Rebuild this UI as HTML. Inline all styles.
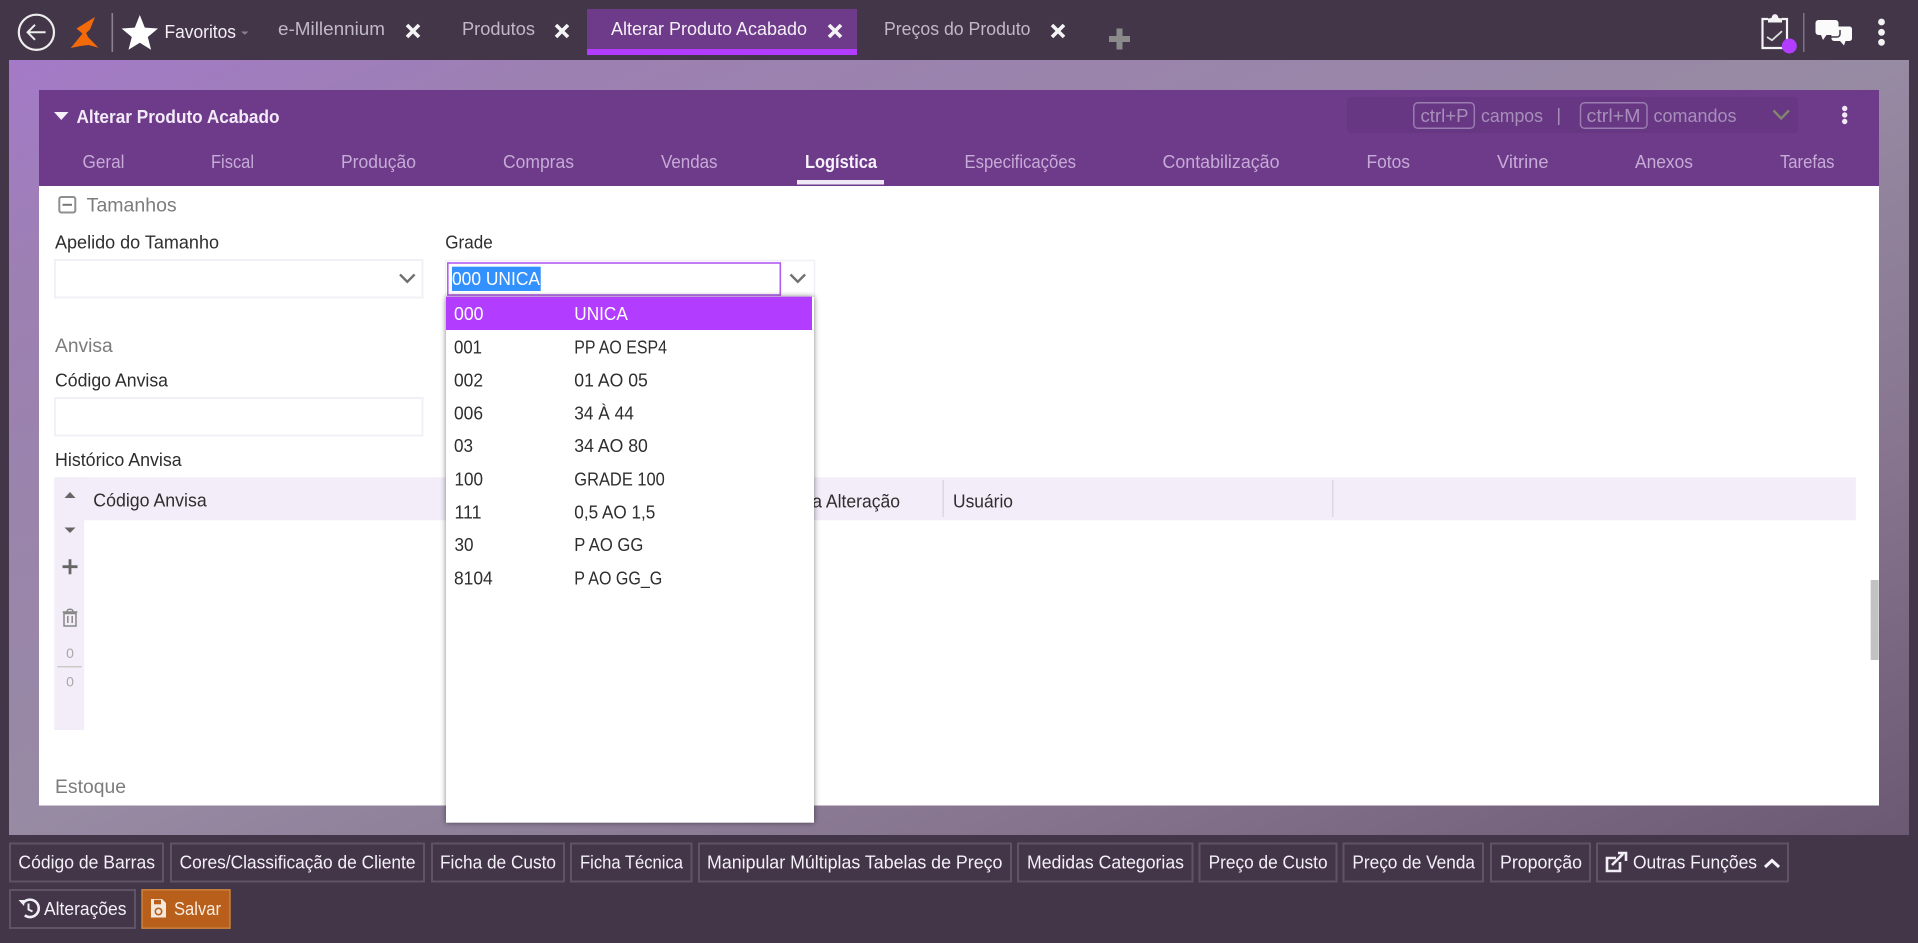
<!DOCTYPE html>
<html lang="pt-BR">
<head>
<meta charset="utf-8">
<title>Alterar Produto Acabado</title>
<style>
html,body{margin:0;padding:0;width:1918px;height:943px;overflow:hidden;background:#433648}
svg{display:block;filter:blur(.35px)}
text{font-family:"Liberation Sans",Arial,sans-serif;font-size:18px;fill:#2e2e2e}
.top{fill:#c0b8c8}
.wh{fill:#f4f0f6}
.tab{fill:#c6abd6;font-size:18.5px}
.sec{fill:#7c7c7c;font-size:19px}
.btn{fill:#f4f0f8}
.kbd{fill:#a78fba;font-size:18.5px}
.bx{fill:#433648;stroke:#605365;stroke-width:2}
.inp{fill:#fff;stroke:#f2eff6;stroke-width:2}
.chev{fill:none;stroke:#707070;stroke-width:2.4}
.x{stroke:#f4f4f4;stroke-width:3.6;fill:none}
</style>
</head>
<body>
<svg xmlns="http://www.w3.org/2000/svg" width="1918" height="943" viewBox="0 0 1918 943">
<defs>
<linearGradient id="bg" x1="0" y1="0" x2="1" y2="1">
<stop offset="0" stop-color="#a47ac8"/>
<stop offset=".15" stop-color="#9c80b2"/>
<stop offset=".5" stop-color="#978aa3"/>
<stop offset=".75" stop-color="#87758f"/>
<stop offset="1" stop-color="#6b5973"/>
</linearGradient>
<filter id="sh" x="-5%" y="-5%" width="110%" height="110%"><feGaussianBlur stdDeviation="3"/></filter>
</defs>

<rect width="1918" height="943" fill="#433648"/>
<rect x="9" y="60" width="1900" height="775" fill="url(#bg)"/>

<!-- top bar -->
<circle cx="36.4" cy="32.3" r="17.6" fill="none" stroke="#eee" stroke-width="2.2"/>
<path d="M45.6 32.3H27.8M35 24.8l-7.4 7.5 7.4 7.5" fill="none" stroke="#eee" stroke-width="2"/>
<path d="M95 17L76.5 28.5 84 35 90 29.5Z" fill="#f26a0a"/>
<path d="M85 30.5L70.7 48 80.5 46 88.5 45 98.5 47.8 88 37Z" fill="#f26a0a"/>
<rect x="111.5" y="13" width="1.6" height="39" fill="#8b8090"/>
<path d="M139.8 15l5 12.6 13.2.9-10.2 8.5 3.3 12.8-11.3-7.1-11.3 7.1 3.3-12.8-10.2-8.5 13.2-.9z" fill="#fff"/>
<text x="164.5" y="38" textLength="71.5" lengthAdjust="spacingAndGlyphs" class="wh">Favoritos</text>
<path d="M241 31.5h7.500l-3.75 3.2z" fill="#8b8090"/>

<text x="278" y="35" textLength="107" lengthAdjust="spacingAndGlyphs" class="top">e-Millennium</text>
<path class="x" d="M407 25l12 12M419 25l-12 12"/>
<text x="462" y="35" textLength="73" lengthAdjust="spacingAndGlyphs" class="top">Produtos</text>
<path class="x" d="M556 25l12 12M568 25l-12 12"/>

<rect x="587" y="9" width="270" height="46" fill="#6e3a8a"/>
<rect x="587" y="49" width="270" height="6" fill="#b23cff"/>
<text x="611" y="35" textLength="196" lengthAdjust="spacingAndGlyphs" class="wh">Alterar Produto Acabado</text>
<path class="x" d="M829 25l12 12M841 25l-12 12"/>

<text x="884" y="35" textLength="146.5" lengthAdjust="spacingAndGlyphs" class="top">Preços do Produto</text>
<path class="x" d="M1052 25l12 12M1064 25l-12 12"/>
<path d="M1109 39h21M1119.5 28.5v21" stroke="#8a8a8a" stroke-width="6" fill="none"/>

<!-- top right icons -->
<path d="M1768 19h-5.5v29h24.5v-29h-5.5" fill="none" stroke="#f4f4f4" stroke-width="2.2"/>
<path d="M1768 22.5v-4l3.5-.5c.5-2.5 1.500-3.800 3.500-3.800s3 1.300 3.500 3.800l3.500.5v4z" fill="#f4f4f4"/>
<path d="M1767 37l5 3.200 10-9" fill="none" stroke="#ddd" stroke-width="1.8"/>
<circle cx="1789.3" cy="46" r="7.5" fill="#b23cff"/>
<rect x="1803" y="13" width="1.5" height="39" fill="#7d7284"/>
<path d="M1818.5 20h17a3 3 0 0 1 3 3v9a3 3 0 0 1-3 3h-9l-3.500 5-2-5h-2.500a3 3 0 0 1-3-3v-9a3 3 0 0 1 3-3z" fill="#fbfbfb"/>
<path d="M1831 26.5h18.500a2.500 2.500 0 0 1 2.500 2.500v9.500a2.500 2.500 0 0 1-2.500 2.500h-4l-1.500 4.500-4-4.500h-6a2.500 2.500 0 0 1-2.500-2.500" fill="#fbfbfb"/>
<path d="M1840 30v4a3 3 0 0 1-3 3h-8" fill="none" stroke="#433648" stroke-width="1.5"/>
<circle cx="1881.5" cy="22" r="3.4" fill="#f4f4f4"/>
<circle cx="1881.5" cy="32.3" r="3.4" fill="#f4f4f4"/>
<circle cx="1881.5" cy="42.3" r="3.4" fill="#f4f4f4"/>

<!-- panel -->
<rect x="39" y="186" width="1840" height="619.5" fill="#fff"/>
<rect x="39" y="90" width="1840" height="96" fill="#6e3a8a"/>
<path d="M54 112h14.5l-7.25 8z" fill="#f6f0fa"/>
<text x="76.5" y="123" textLength="203" lengthAdjust="spacingAndGlyphs" style="fill:#f2eaf7;font-weight:700;font-size:18.5px">Alterar Produto Acabado</text>

<rect x="1347" y="97" width="451" height="36" rx="4" fill="#673783"/>
<rect x="1413.8" y="102.8" width="60.5" height="25.5" rx="4" fill="none" stroke="#9a7cb0" stroke-width="1.5"/>
<text x="1420.5" y="122" textLength="48" lengthAdjust="spacingAndGlyphs" class="kbd">ctrl+P</text>
<text x="1481" y="122" textLength="62" lengthAdjust="spacingAndGlyphs" class="kbd">campos</text>
<rect x="1558" y="108" width="1.5" height="17" fill="#a78fba"/>
<rect x="1580.5" y="102.8" width="66.5" height="25.5" rx="4" fill="none" stroke="#9a7cb0" stroke-width="1.5"/>
<text x="1586.5" y="122" textLength="54" lengthAdjust="spacingAndGlyphs" class="kbd">ctrl+M</text>
<text x="1653.5" y="122" textLength="83" lengthAdjust="spacingAndGlyphs" class="kbd">comandos</text>
<path d="M1773.5 110.5l7.7 8 7.7-8" fill="none" stroke="#82866e" stroke-width="2.4"/>
<circle cx="1844.7" cy="108.5" r="2.7" fill="#f2eaf7"/>
<circle cx="1844.7" cy="115" r="2.7" fill="#f2eaf7"/>
<circle cx="1844.7" cy="121.5" r="2.7" fill="#f2eaf7"/>

<!-- panel tabs -->
<text x="82.5" y="168" textLength="42" lengthAdjust="spacingAndGlyphs" class="tab">Geral</text>
<text x="211" y="168" textLength="43" lengthAdjust="spacingAndGlyphs" class="tab">Fiscal</text>
<text x="341" y="168" textLength="75" lengthAdjust="spacingAndGlyphs" class="tab">Produção</text>
<text x="503" y="168" textLength="71" lengthAdjust="spacingAndGlyphs" class="tab">Compras</text>
<text x="661" y="168" textLength="56.5" lengthAdjust="spacingAndGlyphs" class="tab">Vendas</text>
<text x="805" y="168" textLength="72" lengthAdjust="spacingAndGlyphs" style="fill:#f6f1fa;font-weight:700;font-size:18.5px">Logística</text>
<rect x="797" y="180" width="87" height="4.5" fill="#efe8f5"/>
<text x="964.5" y="168" textLength="111.5" lengthAdjust="spacingAndGlyphs" class="tab">Especificações</text>
<text x="1162.5" y="168" textLength="117" lengthAdjust="spacingAndGlyphs" class="tab">Contabilização</text>
<text x="1366.5" y="168" textLength="43.5" lengthAdjust="spacingAndGlyphs" class="tab">Fotos</text>
<text x="1497" y="168" textLength="51.5" lengthAdjust="spacingAndGlyphs" class="tab">Vitrine</text>
<text x="1635" y="168" textLength="58" lengthAdjust="spacingAndGlyphs" class="tab">Anexos</text>
<text x="1780" y="168" textLength="54.5" lengthAdjust="spacingAndGlyphs" class="tab">Tarefas</text>

<!-- form -->
<rect x="59.3" y="197" width="16" height="15.5" rx="2" fill="none" stroke="#8f8f8f" stroke-width="2"/>
<rect x="62.5" y="203.8" width="9.5" height="2" fill="#777"/>
<text x="86.7" y="211.5" textLength="90" lengthAdjust="spacingAndGlyphs" class="sec">Tamanhos</text>

<text x="55" y="248.5" textLength="164" lengthAdjust="spacingAndGlyphs">Apelido do Tamanho</text>
<rect x="55" y="260" width="367.5" height="37.5" class="inp"/>
<path class="chev" d="M400 274.5l7.3 7.3 7.3-7.3"/>

<text x="55" y="352" textLength="57.7" lengthAdjust="spacingAndGlyphs" class="sec">Anvisa</text>
<text x="55" y="386.5" textLength="113" lengthAdjust="spacingAndGlyphs">Código Anvisa</text>
<rect x="55" y="398" width="367.5" height="37.5" class="inp"/>
<text x="55" y="466" textLength="126.7" lengthAdjust="spacingAndGlyphs">Histórico Anvisa</text>

<!-- table -->
<rect x="54.3" y="477.3" width="1801.5" height="43" fill="#f2edf8"/>
<rect x="54.3" y="477.3" width="30" height="252.7" fill="#f2edf8"/>
<path d="M64.5 498l5.5-6 5.500 6z" fill="#666"/>
<path d="M64.5 527.5l5.5 5.500 5.500-5.500z" fill="#666"/>
<text x="93.3" y="506.5" textLength="113.4" lengthAdjust="spacingAndGlyphs">Código Anvisa</text>
<text x="785" y="507.5" textLength="115" lengthAdjust="spacingAndGlyphs">Data Alteração</text>
<rect x="942.5" y="480" width="1.5" height="37" fill="#dcd8e0"/>
<text x="953" y="507.5" textLength="60" lengthAdjust="spacingAndGlyphs">Usuário</text>
<rect x="1332" y="480" width="1.5" height="37" fill="#dcd8e0"/>
<path d="M62.5 566.7h15M70 559.2v15" stroke="#666" stroke-width="2.8" fill="none"/>
<path d="M64 613.5h12v12.5h-12zM62.7 612h14.600M67 612c0-2 .8-2.800 3-2.800s3 .8 3 2.800M67.8 616v7M72.200 616v7" fill="none" stroke="#888" stroke-width="1.5"/>
<text x="70" y="658" text-anchor="middle" style="fill:#a8a8a8;font-size:14px">0</text>
<rect x="57.3" y="666" width="24.4" height="1.4" fill="#c8c8c8"/>
<text x="70" y="686.5" text-anchor="middle" style="fill:#a8a8a8;font-size:14px">0</text>
<text x="55" y="793" textLength="71" lengthAdjust="spacingAndGlyphs" class="sec">Estoque</text>
<rect x="1870.7" y="580" width="8" height="80" fill="#c2c2c2"/>

<!-- grade field -->
<text x="445.3" y="248.5" textLength="47.4" lengthAdjust="spacingAndGlyphs">Grade</text>
<rect x="445.5" y="260.5" width="369" height="36" fill="#fff" stroke="#f2eff6" stroke-width="1.5"/>
<rect x="447.8" y="263" width="332.5" height="32" fill="#fff" stroke="#b45cf0" stroke-width="1.6"/>
<rect x="452" y="266.7" width="88.7" height="24.3" fill="#3390ff"/>
<text x="452" y="285" textLength="88" lengthAdjust="spacingAndGlyphs" style="fill:#fff">000 UNICA</text>
<path class="chev" d="M790.5 274.5l7.3 7.3 7.3-7.3"/>

<!-- dropdown -->
<rect x="446" y="296.7" width="368" height="526" fill="#000" opacity=".5" filter="url(#sh)"/>
<rect x="446" y="296.7" width="368" height="526" fill="#fff"/>
<rect x="446" y="296.7" width="366" height="33.3" fill="#b23cff"/>
<g>
<text x="454" y="320" style="fill:#fff" textLength="29.5" lengthAdjust="spacingAndGlyphs">000</text><text x="574.3" y="320" style="fill:#fff" textLength="53.5" lengthAdjust="spacingAndGlyphs">UNICA</text>
<text x="454" y="353.3" textLength="28" lengthAdjust="spacingAndGlyphs">001</text><text x="574.3" y="353.3" textLength="92.7" lengthAdjust="spacingAndGlyphs">PP AO ESP4</text>
<text x="454" y="386.3" textLength="29" lengthAdjust="spacingAndGlyphs">002</text><text x="574.3" y="386.3" textLength="73.5" lengthAdjust="spacingAndGlyphs">01 AO 05</text>
<text x="454" y="419.3" textLength="29" lengthAdjust="spacingAndGlyphs">006</text><text x="574.3" y="419.3" textLength="59.5" lengthAdjust="spacingAndGlyphs">34 À 44</text>
<text x="454" y="452" textLength="19" lengthAdjust="spacingAndGlyphs">03</text><text x="574.3" y="452" textLength="73.5" lengthAdjust="spacingAndGlyphs">34 AO 80</text>
<text x="454.5" y="485.3" textLength="28.5" lengthAdjust="spacingAndGlyphs">100</text><text x="574.3" y="485.3" textLength="90.5" lengthAdjust="spacingAndGlyphs">GRADE 100</text>
<text x="454.5" y="518.3" textLength="27" lengthAdjust="spacingAndGlyphs">111</text><text x="574.3" y="518.3" textLength="81" lengthAdjust="spacingAndGlyphs">0,5 AO 1,5</text>
<text x="454.5" y="551" textLength="19" lengthAdjust="spacingAndGlyphs">30</text><text x="574.3" y="551" textLength="69" lengthAdjust="spacingAndGlyphs">P AO GG</text>
<text x="454" y="584.3" textLength="38.7" lengthAdjust="spacingAndGlyphs">8104</text><text x="574.3" y="584.3" textLength="88" lengthAdjust="spacingAndGlyphs">P AO GG_G</text>
</g>

<!-- bottom buttons -->
<g>
<rect class="bx" x="10" y="843.5" width="153" height="38"/><text class="btn" x="18.4" y="868.5" textLength="136.6" lengthAdjust="spacingAndGlyphs">Código de Barras</text>
<rect class="bx" x="171" y="843.5" width="253" height="38"/><text class="btn" x="179.6" y="868.5" textLength="235.9" lengthAdjust="spacingAndGlyphs">Cores/Classificação de Cliente</text>
<rect class="bx" x="432" y="843.5" width="132" height="38"/><text class="btn" x="440" y="868.5" textLength="116" lengthAdjust="spacingAndGlyphs">Ficha de Custo</text>
<rect class="bx" x="571" y="843.5" width="120.5" height="38"/><text class="btn" x="580" y="868.5" textLength="103" lengthAdjust="spacingAndGlyphs">Ficha Técnica</text>
<rect class="bx" x="699" y="843.5" width="312" height="38"/><text class="btn" x="707" y="868.5" textLength="295.4" lengthAdjust="spacingAndGlyphs">Manipular Múltiplas Tabelas de Preço</text>
<rect class="bx" x="1018" y="843.5" width="174.5" height="38"/><text class="btn" x="1027" y="868.5" textLength="157" lengthAdjust="spacingAndGlyphs">Medidas Categorias</text>
<rect class="bx" x="1199.5" y="843.5" width="137" height="38"/><text class="btn" x="1208.6" y="868.5" textLength="119" lengthAdjust="spacingAndGlyphs">Preço de Custo</text>
<rect class="bx" x="1343.5" y="843.5" width="139.5" height="38"/><text class="btn" x="1352.4" y="868.5" textLength="122.6" lengthAdjust="spacingAndGlyphs">Preço de Venda</text>
<rect class="bx" x="1491" y="843.5" width="99" height="38"/><text class="btn" x="1500" y="868.5" textLength="82" lengthAdjust="spacingAndGlyphs">Proporção</text>
<rect class="bx" x="1597" y="843.5" width="191" height="38"/>
<path d="M1620 862v9h-13v-13h9" fill="none" stroke="#f2eef6" stroke-width="2.6"/>
<path d="M1612 865l11-11M1618 853h8v8" fill="none" stroke="#f2eef6" stroke-width="2.6"/>
<text class="btn" x="1633" y="868.5" textLength="124" lengthAdjust="spacingAndGlyphs">Outras Funções</text>
<path d="M1765 867l7-6.5 7 6.5" fill="none" stroke="#f6f2fa" stroke-width="3"/>

<rect class="bx" x="10" y="890" width="125" height="38"/>
<path d="M22.5 904a8.700 8.700 0 1 1 2.300 11.300" fill="none" stroke="#f2eef6" stroke-width="2.6"/>
<path d="M18.5 900h6.500l-1 6z" fill="#f2eef6"/>
<path d="M28.5 903.5v6l4 2" fill="none" stroke="#f2eef6" stroke-width="2"/>
<text class="btn" x="44" y="915" textLength="82.5" lengthAdjust="spacingAndGlyphs">Alterações</text>

<rect x="142" y="889.8" width="88" height="38.4" fill="#b85f1c" stroke="#d0853c" stroke-width="1.4"/>
<path d="M151 899h11l4 4v14.500h-15z" fill="#f4e8dc"/>
<rect x="154" y="899.8" width="7" height="4.5" fill="#b85f1c"/>
<circle cx="158.5" cy="911.5" r="3.2" fill="none" stroke="#b85f1c" stroke-width="1.6"/>
<text x="174" y="915" textLength="47" lengthAdjust="spacingAndGlyphs" style="fill:#f8ece0">Salvar</text>
</g>
</svg>
</body>
</html>
